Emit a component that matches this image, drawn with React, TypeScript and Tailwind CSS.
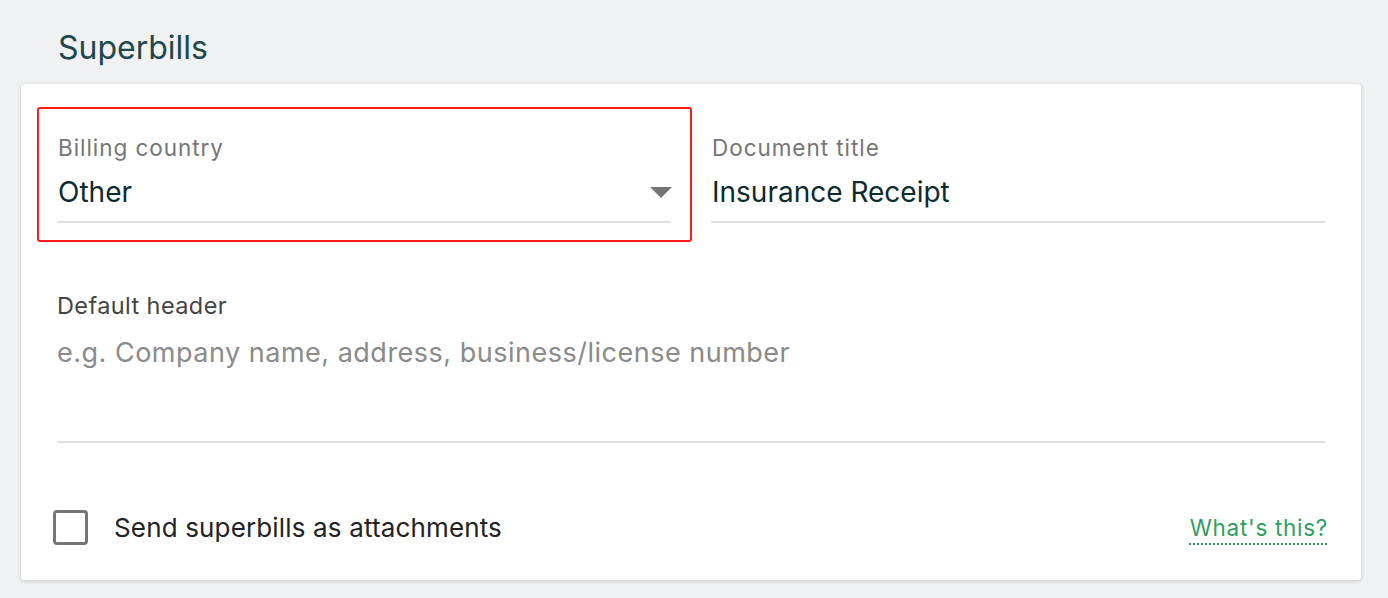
import React, { useState } from 'react';

const inter = 'font-["Inter","Noto_Sans",sans-serif]';

function Caret() {
  return (
    <svg width="22" height="11" viewBox="0 0 22 11" className="shrink-0">
      <path d="M0 0h22L11 11z" fill="#757575" />
    </svg>
  );
}

function FieldLabel({ children }: { children: React.ReactNode }) {
  return <div className={`${inter} pl-px text-[22.5px] leading-[26px] tracking-[0.95px] text-[#757575]`}>{children}</div>;
}

export default function App() {
  const [attach, setAttach] = useState(false);

  return (
    <div className="min-h-[598px] w-full bg-[#eff1f3] pt-[28px] pb-[18px]">
      <h2 className={`${inter} pl-[58px] text-[32px] leading-[40px] text-[#21474a]`}>Superbills</h2>

      <div className="mx-[21px] mt-[16px] w-[1340px] rounded-[4px] bg-white pl-[36px] pr-[36px] pt-[23px] pb-[35px] shadow-[0_1px_4px_rgba(0,0,0,0.18)]">
        {/* country + title row */}
        <div className="flex items-start gap-[19px]">
          <div className="-ml-[20px] w-[655px] shrink-0 rounded-[3px] border-2 border-[#ff1a1a] pl-[18px] pr-[19px] pt-[26px] pb-[17px]">
            <FieldLabel>Billing country</FieldLabel>
            <div className="mt-[12px] flex items-center justify-between border-b-2 border-[#e0e0e0] pb-[10px]">
              <span className={`${inter} pl-px text-[28px] leading-[38px] text-[#0d2b2e]`}>Other</span>
              <span className="mr-[-1px]"><Caret /></span>
            </div>
          </div>

          <div className="flex-1 pt-[28px]">
            <FieldLabel>Document title</FieldLabel>
            <div className="mt-[12px] border-b-2 border-[#e0e0e0] pb-[10px]">
              <span className={`${inter} pl-px text-[28px] leading-[38px] text-[#0d2b2e]`}>Insurance Receipt</span>
            </div>
          </div>
        </div>

        {/* default header */}
        <div className="mt-[49px]">
          <div className={`${inter} text-[23.5px] leading-[30px] tracking-[0.4px] text-[#444444]`}>Default header</div>
          <div className="mt-[13px] h-[109px] border-b-2 border-[#e0e0e0]">
            <span className={`${inter} text-[27px] leading-[38px] tracking-[0.5px] text-[#8a8a8a]`}>
              e.g. Company name, address, business/license number
            </span>
          </div>
        </div>

        {/* attachments */}
        <div className="mt-[67px] flex items-center justify-between">
          <label className="-ml-[4px] flex cursor-pointer items-center gap-[26px]" onClick={() => setAttach(!attach)}>
            <span className="h-[35px] w-[35px] rounded-[4px] border-[3px] border-[#757575]" />
            <span className={`${inter} text-[26px] leading-[32px] tracking-[0.15px] text-[#222222]`}>Send superbills as attachments</span>
          </label>
          <a className={`-mr-[3px] ${inter} text-[22.5px] leading-[30px] tracking-[0.7px] text-[#2e9e5e] underline decoration-dotted decoration-2 underline-offset-[8px]`}>
            What's this?
          </a>
        </div>
      </div>
    </div>
  );
}
